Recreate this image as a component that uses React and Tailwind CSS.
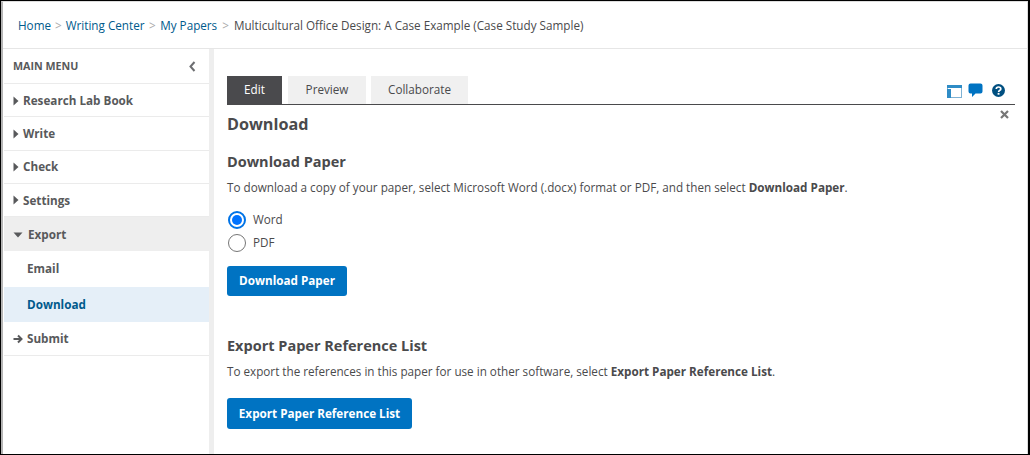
const F = { fontFamily: '"Open Sans", sans-serif' };

function Caret() {
  return (
    <svg width="6" height="10" viewBox="0 0 6 10" className="shrink-0">
      <path d="M0.5 0.5 L5.5 5 L0.5 9.5 Z" fill="#58595b" />
    </svg>
  );
}

function Row({ label }) {
  return (
    <div className="h-[33.25px] pt-[1px] flex items-center gap-[4px] pl-[9px] border-b border-[#ebebeb] text-[11.7px] font-bold text-[#58595b]">
      <Caret />
      <span>{label}</span>
    </div>
  );
}

export default function App() {
  return (
    <div style={F} className="w-[1030px] h-[455px] overflow-hidden bg-white border-t border-b border-l border-r-2 border-black text-[#4a4a4c]">
      <div className="h-full flex flex-col border-t border-l-2 border-r border-t-[#dddddd] border-l-[#b5b5b5] border-r-[#dddddd]">
        <div className="h-[47px] shrink-0 flex items-center pl-[15px] pt-[2px] border-b border-[#e6e6e6] text-[11.7px]">
          <a className="text-[#005a8c]">Home</a>
          <span className="mx-[4px] text-[#aaa]">&gt;</span>
          <a className="text-[#005a8c]">Writing Center</a>
          <span className="mx-[4.5px] text-[#aaa]">&gt;</span>
          <a className="text-[#005a8c]">My Papers</a>
          <span className="mx-[5px] text-[#aaa]">&gt;</span>
          <span className="text-[#4a4a4c]">Multicultural Office Design: A Case Example (Case Study Sample)</span>
        </div>
        <div className="flex flex-1 min-h-0">
          <aside className="w-[205px] ml-px shrink-0">
            <div className="h-[35px] flex items-center justify-between pl-[9px] pr-[13px] border-b border-[#ebebeb]">
              <span className="text-[10.7px] font-bold text-[#58595b]">MAIN MENU</span>
              <svg width="7" height="11" viewBox="0 0 7 11">
                <path d="M5.5 1 L1.5 5.5 L5.5 10" fill="none" stroke="#6d6e71" strokeWidth="2" />
              </svg>
            </div>
            <Row label="Research Lab Book" />
            <Row label="Write" />
            <Row label="Check" />
            <Row label="Settings" />
            <div className="h-[34px] pt-[1px] flex items-center gap-[5px] pl-[9px] bg-[#eeeeee] text-[11.7px] font-bold text-[#58595b]">
              <svg width="10" height="6" viewBox="0 0 10 6" className="shrink-0">
                <path d="M0.5 0.5 L9.5 0.5 L5 5.5 Z" fill="#58595b" />
              </svg>
              <span>Export</span>
            </div>
            <div className="h-[36px] pb-[1px] flex items-center pl-[23px] text-[11.7px] font-bold text-[#58595b]">Email</div>
            <div className="h-[35px] flex items-center pl-[23px] bg-[#e5eff8] text-[11.7px] font-bold text-[#005a8c]">Download</div>
            <div className="h-[33.5px] pt-[1px] flex items-center gap-[4px] pl-[9px] border-b border-[#ebebeb] text-[11.7px] font-bold text-[#58595b]">
              <svg width="10" height="10" viewBox="0 0 10 10" className="shrink-0">
                <path d="M0.5 5 H8 M5 1.5 L8.5 5 L5 8.5" fill="none" stroke="#58595b" strokeWidth="2" />
              </svg>
              <span>Submit</span>
            </div>
          </aside>
          <div className="w-[5px] shrink-0 bg-[#eeeeee]" />
          <main className="flex-1 min-w-0 pl-[13px] pr-[12px] pt-[27px] relative">
            <div className="flex items-end gap-[6px] h-[29px] border-b border-[#4a4a4c] relative">
              <div className="w-[55px] h-[28px] flex items-center justify-center bg-[#4a4a4d] text-white text-[11.7px]">Edit</div>
              <div className="w-[78px] h-[28px] flex items-center justify-center bg-[#f0f0f0] text-[11.7px]">Preview</div>
              <div className="w-[97px] h-[28px] -ml-px flex items-center justify-center bg-[#f0f0f0] text-[11.7px]">Collaborate</div>
              <div className="absolute right-[10px] top-[8px] flex items-center">
                <svg width="15" height="13" viewBox="0 0 15 13">
                  <rect x="0.5" y="0.5" width="14" height="12" fill="#fff" stroke="#7fb2d4" />
                  <rect x="0" y="0" width="15" height="3" fill="#2f8cc6" />
                  <rect x="0" y="4" width="4" height="9" fill="#2f8cc6" />
                </svg>
                <svg width="15" height="15" viewBox="0 0 15 15" className="ml-[6px] -mt-[1px]">
                  <path d="M2.5 0.5 H12.5 A2 2 0 0 1 14.5 2.5 V8.5 A2 2 0 0 1 12.5 10.5 H7.5 L4 14 V10.5 H2.5 A2 2 0 0 1 0.5 8.5 V2.5 A2 2 0 0 1 2.5 0.5 Z" fill="#0073c2" />
                </svg>
                <svg width="13" height="13" viewBox="0 0 13 13" className="ml-[9px] -mt-[1px]">
                  <circle cx="6.5" cy="6.5" r="6.5" fill="#004f80" />
                  <path d="M4.3 5 C4.3 3.6 5.3 3 6.5 3 C7.8 3 8.8 3.7 8.8 4.9 C8.8 6.4 6.6 6.4 6.6 8" fill="none" stroke="#fff" strokeWidth="1.7" />
                  <rect x="5.6" y="8.9" width="1.9" height="1.8" fill="#fff" />
                </svg>
              </div>
            </div>
            <svg width="9" height="9" viewBox="0 0 9 9" className="absolute right-[18px] top-[61px]">
              <path d="M1 1 L8 8 M8 1 L1 8" stroke="#777" strokeWidth="2.2" />
            </svg>
            <h1 className="mt-[8px] text-[16.2px] leading-[22px] font-bold text-[#4a4a4c]">Download</h1>
            <h2 className="mt-[17px] text-[14.5px] leading-[20px] font-bold text-[#4a4a4c]">Download Paper</h2>
            <p className="mt-[6px] text-[11.7px] leading-[18px]">
              To download a copy of your paper, select Microsoft Word (.docx) format or PDF, and then select <b>Download Paper</b>.
            </p>
            <label className="mt-[12px] h-[23px] flex items-center gap-[7px] text-[11.7px]">
              <span className="w-[18px] h-[18px] ml-px rounded-full border-2 border-[#0073e6] flex items-center justify-center">
                <span className="w-[10px] h-[10px] rounded-full bg-[#0073ff]" />
              </span>
              Word
            </label>
            <label className="h-[23px] flex items-center gap-[7px] text-[11.7px]">
              <span className="w-[18px] h-[18px] ml-px rounded-full border border-[#767676]" />
              PDF
            </label>
            <button className="mt-[12px] block w-[120px] h-[30px] rounded-[3px] bg-[#0073c2] text-white text-[11.7px] font-bold">Download Paper</button>
            <h2 className="mt-[40px] text-[14.5px] leading-[20px] font-bold text-[#4a4a4c]">Export Paper Reference List</h2>
            <p className="mt-[6px] text-[11.7px] leading-[18px]">
              To export the references in this paper for use in other software, select <b>Export Paper Reference List</b>.
            </p>
            <button className="mt-[18px] block w-[185px] h-[31px] rounded-[3px] bg-[#0073c2] text-white text-[11.7px] font-bold">Export Paper Reference List</button>
          </main>
        </div>
      </div>
    </div>
  );
}
